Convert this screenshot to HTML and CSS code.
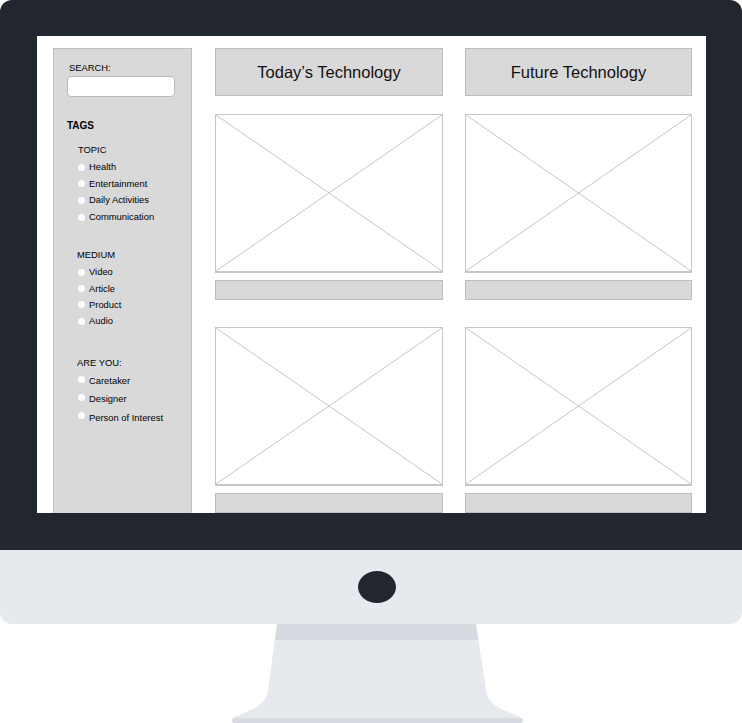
FILE: index.html
```html
<!DOCTYPE html>
<html lang="en">
<head>
    <meta charset="UTF-8">
    <meta name="viewport" content="width=device-width, initial-scale=1.0">
    <title>Wireframe on iMac</title>
    <link rel="stylesheet" href="styles.css">
</head>
<body>
    <div class="imac">
        <div class="bezel">
            <div class="screen">
                <aside class="sidebar">
                    <div class="search-label">SEARCH:</div>
                    <div class="search-box"></div>

                    <div class="tags-title">TAGS</div>

                    <div class="group group-topic">
                        <div class="group-title">TOPIC</div>
                        <ul>
                            <li><span class="radio"></span>Health</li>
                            <li><span class="radio"></span>Entertainment</li>
                            <li><span class="radio"></span>Daily Activities</li>
                            <li><span class="radio"></span>Communication</li>
                        </ul>
                    </div>

                    <div class="group group-medium">
                        <div class="group-title">MEDIUM</div>
                        <ul>
                            <li><span class="radio"></span>Video</li>
                            <li><span class="radio"></span>Article</li>
                            <li><span class="radio"></span>Product</li>
                            <li><span class="radio"></span>Audio</li>
                        </ul>
                    </div>

                    <div class="group group-you">
                        <div class="group-title">ARE YOU:</div>
                        <ul>
                            <li><span class="radio"></span>Caretaker</li>
                            <li><span class="radio"></span>Designer</li>
                            <li><span class="radio"></span>Person of Interest</li>
                        </ul>
                    </div>
                </aside>

                <main class="grid">
                    <div class="heading">Today’s Technology</div>
                    <div class="heading">Future Technology</div>

                    <div class="card">
                        <div class="thumb">
                            <svg viewBox="0 0 100 100" preserveAspectRatio="none"><line x1="0" y1="0" x2="100" y2="100"/><line x1="100" y1="0" x2="0" y2="100"/></svg>
                        </div>
                        <div class="caption"></div>
                    </div>
                    <div class="card">
                        <div class="thumb">
                            <svg viewBox="0 0 100 100" preserveAspectRatio="none"><line x1="0" y1="0" x2="100" y2="100"/><line x1="100" y1="0" x2="0" y2="100"/></svg>
                        </div>
                        <div class="caption"></div>
                    </div>
                    <div class="card">
                        <div class="thumb">
                            <svg viewBox="0 0 100 100" preserveAspectRatio="none"><line x1="0" y1="0" x2="100" y2="100"/><line x1="100" y1="0" x2="0" y2="100"/></svg>
                        </div>
                        <div class="caption"></div>
                    </div>
                    <div class="card">
                        <div class="thumb">
                            <svg viewBox="0 0 100 100" preserveAspectRatio="none"><line x1="0" y1="0" x2="100" y2="100"/><line x1="100" y1="0" x2="0" y2="100"/></svg>
                        </div>
                        <div class="caption"></div>
                    </div>
                </main>
            </div>
        </div>

        <div class="chin">
            <div class="camera"></div>
        </div>

        <svg class="stand" viewBox="0 0 742 99" width="742" height="99">
            <defs>
                <clipPath id="stand-shape">
                    <path d="M277 0 H476 L486 66 C487.5 76 493 81 501 85 L519 92.5 C524.5 95 524.5 99 519 99 H236 C230.5 99 230.5 95 236 92.5 L253 85 C261 81 266.5 76 268 66 Z"/>
                </clipPath>
            </defs>
            <g clip-path="url(#stand-shape)">
                <rect x="0" y="0" width="742" height="99" fill="#e6e9ee"/>
                <rect x="0" y="0" width="742" height="16" fill="#d7dbe1"/>
                <rect x="0" y="94" width="742" height="5" fill="#d7dbe1"/>
            </g>
        </svg>
    </div>
</body>
</html>
```

FILE: styles.css
```css
* { box-sizing: border-box; }
body {
    margin: 0;
    background: #fff;
    font-family: "Liberation Sans", Arial, sans-serif;
    color: #000;
}
.imac {
    width: 742px;
}
.bezel {
    background: #22262f;
    border-radius: 12px 12px 0 0;
    padding: 36px 36px 37px 37px;
}
.screen {
    background: #fff;
    height: 477px;
    overflow: hidden;
    display: flex;
    gap: 23px;
    padding: 12px 14px 0 16px;
}

/* sidebar */
.sidebar {
    width: 139px;
    height: 520px;
    flex: none;
    background: #d9d9d9;
    border: 1px solid #bfbfbf;
    padding-top: 12px;
    font-size: 9.4px;
}
.search-label {
    line-height: 14px;
    padding-left: 15px;
}
.search-box {
    margin: 1px 0 0 13px;
    width: 108px;
    height: 21px;
    background: #fff;
    border: 1px solid #b9b9b9;
    border-radius: 4px;
}
.tags-title {
    margin-top: 22px;
    padding-left: 13px;
    line-height: 14px;
    font-weight: bold;
    font-size: 10px;
}
.group {
    padding-left: 24px;
}
.group-title {
    line-height: 16px;
}
.group ul {
    list-style: none;
    margin: 1px 0 0;
    padding: 0;
}
.group li {
    display: flex;
    align-items: center;
    line-height: 16.6px;
}
.radio {
    width: 7px;
    height: 7px;
    border-radius: 50%;
    background: #fff;
    margin-right: 4px;
    flex: none;
}
.group-topic { margin-top: 9px; }
.group-medium { margin-top: 22px; padding-left: 23px; }
.group-medium li { line-height: 16.2px; padding-left: 1px; }
.group-you { margin-top: 26px; padding-left: 23px; }
.group-you li { line-height: 18.3px; padding-left: 1px; }
.group-you .radio { margin-top: -4px; }

/* main grid */
.grid {
    display: grid;
    grid-template-columns: 228px 227px;
    column-gap: 22px;
    row-gap: 18px;
    align-content: start;
}
.heading {
    height: 48px;
    background: #d9d9d9;
    border: 1px solid #bdbdbd;
    display: flex;
    align-items: center;
    justify-content: center;
    font-size: 16.5px;
    color: #111;
}
.card {
    padding-bottom: 9px;
}
.thumb {
    height: 159px;
    border: 1px solid #c6c6c6;
    border-bottom-width: 2px;
    background: #fff;
}
.thumb svg {
    display: block;
    width: 100%;
    height: 100%;
}
.thumb line {
    stroke: #c6c6c6;
    stroke-width: 1;
    vector-effect: non-scaling-stroke;
}
.caption {
    margin-top: 7px;
    height: 20px;
    background: #d9d9d9;
    border: 1px solid #bdbdbd;
}

/* lower body */
.chin {
    height: 74px;
    background: #e6e9ee;
    border-radius: 0 0 12px 12px;
    display: flex;
    justify-content: center;
    align-items: center;
    padding-left: 12px;
}
.camera {
    width: 38px;
    height: 32px;
    border-radius: 50%;
    background: #22262f;
}
.stand {
    display: block;
}
```
